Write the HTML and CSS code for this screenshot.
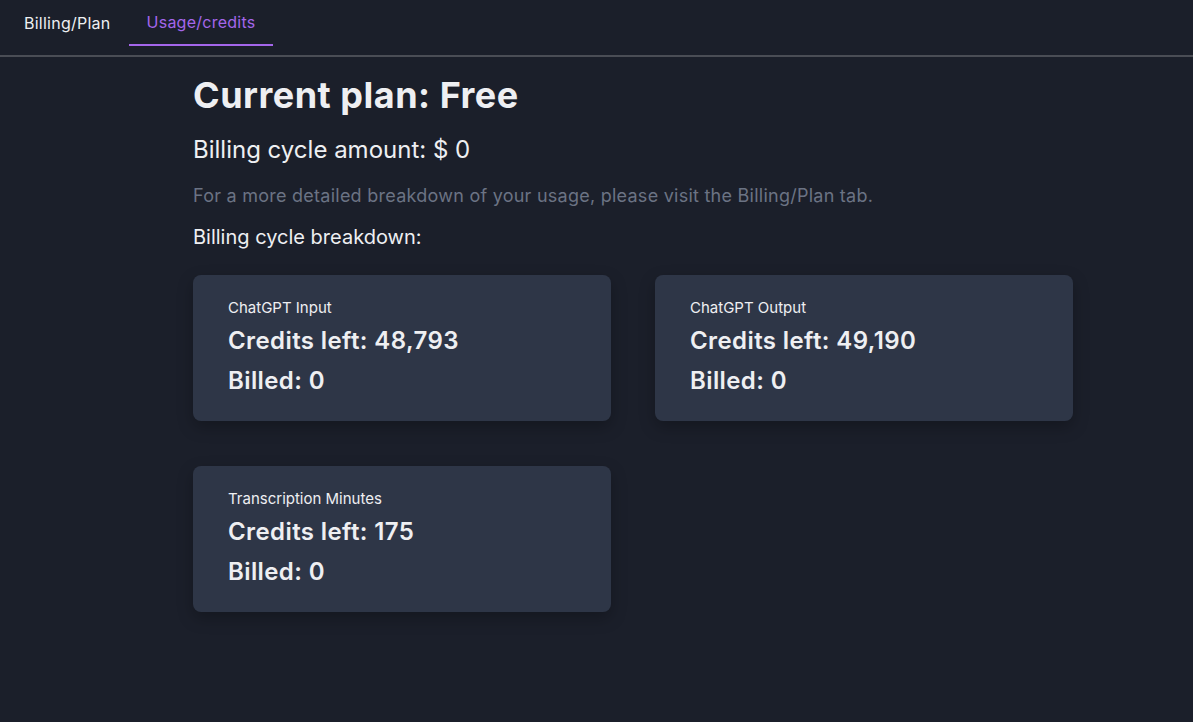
FILE: index.html
```html
<!DOCTYPE html>
<html>
<head>
<meta charset="utf-8">
<link rel="stylesheet" href="styles.css">
</head>
<body>
<nav class="tabs">
  <a class="tab">Billing/Plan</a>
  <a class="tab active">Usage/credits</a>
</nav>
<main class="content">
  <h1 class="title">Current plan: Free</h1>
  <p class="amount">Billing cycle amount: $ 0</p>
  <p class="hint">For a more detailed breakdown of your usage, please visit the Billing/Plan tab.</p>
  <p class="breakdown">Billing cycle breakdown:</p>
  <div class="grid">
    <div class="card">
      <div class="card-label">ChatGPT Input</div>
      <div class="card-value">Credits left: 48,793</div>
      <div class="card-value">Billed: 0</div>
    </div>
    <div class="card">
      <div class="card-label">ChatGPT Output</div>
      <div class="card-value">Credits left: 49,190</div>
      <div class="card-value">Billed: 0</div>
    </div>
    <div class="card">
      <div class="card-label">Transcription Minutes</div>
      <div class="card-value">Credits left: 175</div>
      <div class="card-value">Billed: 0</div>
    </div>
  </div>
</main>
</body>
</html>
```
FILE: styles.css
```css
html, body {
  margin: 0;
  padding: 0;
  background: #1b1f2a;
  font-family: Inter, "Noto Sans", sans-serif;
  color: #eeeff2;
  height: 100%;
}
.tabs {
  display: flex;
  height: 55px;
  padding-left: 6px;
  border-bottom: 2px solid #4a4d55;
}
.tab {
  display: flex;
  align-items: center;
  box-sizing: border-box;
  height: 46px;
  padding: 0 18px 0;
  font-size: 16px;
  letter-spacing: 0.25px;
  color: #eeeff2;
}
.tab.active {
  color: #a466ea;
  border-bottom: 2px solid #a466ea;
}
.content {
  padding-left: 193px;
  width: 880px;
}
.title {
  margin: 0;
  padding-top: 16px;
  font-size: 36px;
  font-weight: 700;
  line-height: 44px;
  letter-spacing: 0.5px;
}
.amount {
  margin: 17px 0 0;
  font-size: 24px;
  line-height: 32px;
}
.hint {
  margin: 16px 0 0;
  font-size: 18px;
  line-height: 28px;
  letter-spacing: 0.25px;
  color: #6b7384;
}
.breakdown {
  margin: 12px 0 0;
  font-size: 20px;
  line-height: 30px;
}
.grid {
  margin-top: 23px;
  display: grid;
  grid-template-columns: 418px 418px;
  column-gap: 44px;
  row-gap: 45px;
}
.card {
  background: #2e3647;
  border-radius: 8px;
  height: 146px;
  box-sizing: border-box;
  padding: 23px 35px;
  box-shadow: 0 6px 16px rgba(0, 0, 0, 0.25);
}
.card-label {
  font-size: 15px;
  line-height: 20px;
  margin-bottom: 3px;
}
.card-value {
  font-size: 24px;
  font-weight: 600;
  line-height: 40px;
  letter-spacing: 0.4px;
}
```
